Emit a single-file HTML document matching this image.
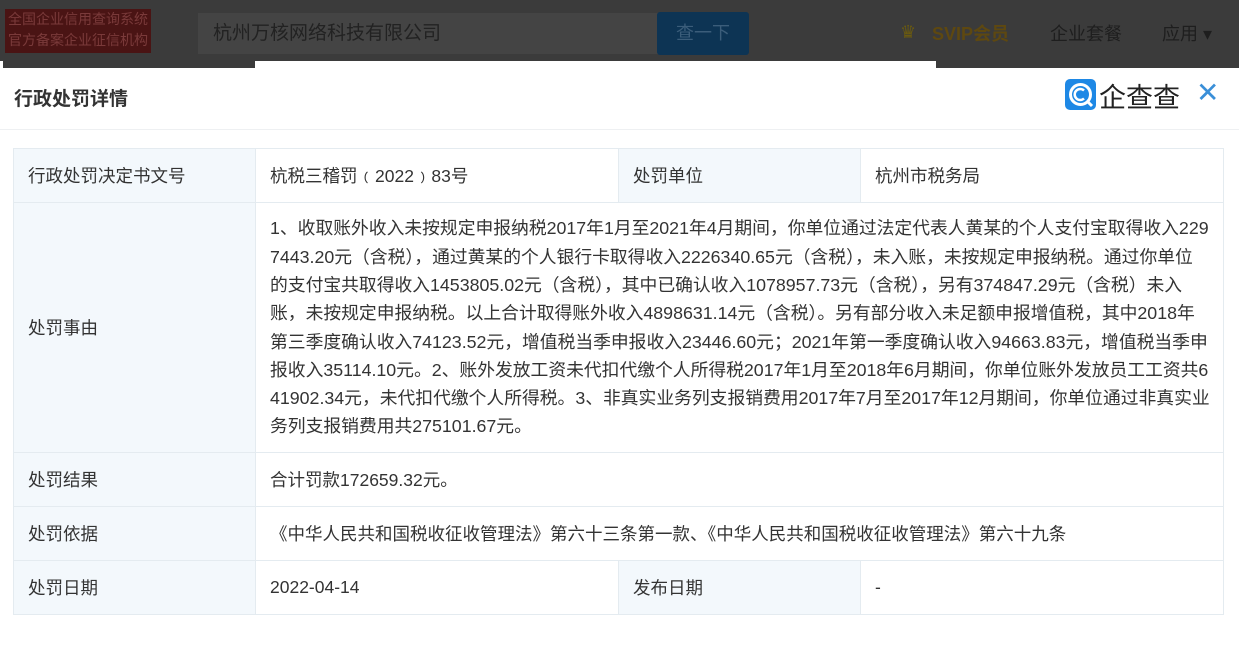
<!DOCTYPE html><html><head><meta charset="utf-8"><style>
body{margin:0;width:1239px;height:657px;overflow:hidden;background:#fff;font-family:"Liberation Sans","Noto Sans CJK SC",sans-serif;position:relative;color:#333}
.top{position:absolute;left:0;top:0;width:1239px;height:61px;background:#3b3b3b}
.abs{position:absolute}
table{position:absolute;left:13px;top:148px;width:1210px;table-layout:fixed;border-collapse:collapse;font-size:17.5px}
td{border:1px solid #e4ebf0;padding:0 14px;vertical-align:middle}
td.l{background:#f3f8fc}
</style></head><body>
<div class="top"></div>
<div class="abs" style="left:3px;top:61px;width:252px;height:7px;background:#3b3b3b"></div>
<div class="abs" style="left:936px;top:61px;width:303px;height:7px;background:#3b3b3b"></div>
<div class="abs" style="left:5px;top:9px;width:146px;height:44px;background:#4a1414;color:#7a3a3a;font-size:14px;line-height:21px;text-align:center;white-space:nowrap;overflow:hidden">全国企业信用查询系统<br>官方备案企业征信机构</div>
<div class="abs" style="left:198px;top:13px;width:466px;height:41px;background:#444;color:#222;font-size:19px;line-height:41px;padding-left:15px;box-sizing:border-box">杭州万核网络科技有限公司</div>
<div class="abs" style="left:657px;top:12px;width:92px;height:43px;background:#0d3454;color:#3b5d7a;font-size:18px;line-height:43px;text-align:center;border-radius:3px">查一下</div>
<div class="abs" style="left:900px;top:22px;width:22px;height:20px;color:#6a5a10;font-size:18px">♛</div>
<div class="abs" style="left:932px;top:20px;color:#5e4810;font-size:18px;font-weight:bold">SVIP会员</div>
<div class="abs" style="left:1050px;top:20px;color:#1e1e1e;font-size:18px">企业套餐</div>
<div class="abs" style="left:1162px;top:20px;color:#1e1e1e;font-size:18px">应用 ▾</div>
<div class="abs" style="left:14px;top:84px;font-size:19px;font-weight:bold;color:#333">行政处罚详情</div>
<svg class="abs" style="left:1065px;top:79px" width="31" height="31" viewBox="0 0 31 31"><rect width="31" height="31" rx="5" fill="#1e88e5"/><circle cx="15.5" cy="15.5" r="10" fill="none" stroke="#fff" stroke-width="3"/><path d="M19 11.5a5.5 5.5 0 1 0 0 8" fill="none" stroke="#fff" stroke-width="2.5"/><path d="M22 22l5 5" stroke="#fff" stroke-width="3"/></svg>
<div class="abs" style="left:1099px;top:76px;font-size:27px;color:#222">企查查</div>
<div class="abs" style="left:1196px;top:76px;font-size:28px;color:#3a8fd8">✕</div>
<div class="abs" style="left:0;top:129px;width:1239px;height:1px;background:#eef0f2"></div>
<table>
<colgroup><col style="width:242px"><col style="width:363px"><col style="width:242px"><col style="width:363px"></colgroup>
<tr style="height:54px"><td class="l">行政处罚决定书文号</td><td>杭税三稽罚﹙2022﹚83号</td><td class="l">处罚单位</td><td>杭州市税务局</td></tr>
<tr style="height:250px"><td class="l">处罚事由</td><td colspan="3" style="line-height:28.3px;white-space:nowrap;font-size:17.8px;overflow:hidden">1、收取账外收入未按规定申报纳税2017年1月至2021年4月期间，你单位通过法定代表人黄某的个人支付宝取得收入229<br>7443.20元（含税），通过黄某的个人银行卡取得收入2226340.65元（含税），未入账，未按规定申报纳税。通过你单位<br>的支付宝共取得收入1453805.02元（含税），其中已确认收入1078957.73元（含税），另有374847.29元（含税）未入<br>账，未按规定申报纳税。以上合计取得账外收入4898631.14元（含税）。另有部分收入未足额申报增值税，其中2018年<br>第三季度确认收入74123.52元，增值税当季申报收入23446.60元；2021年第一季度确认收入94663.83元，增值税当季申<br>报收入35114.10元。2、账外发放工资未代扣代缴个人所得税2017年1月至2018年6月期间，你单位账外发放员工工资共6<br>41902.34元，未代扣代缴个人所得税。3、非真实业务列支报销费用2017年7月至2017年12月期间，你单位通过非真实业<br>务列支报销费用共275101.67元。</td></tr>
<tr style="height:54px"><td class="l">处罚结果</td><td colspan="3">合计罚款172659.32元。</td></tr>
<tr style="height:54px"><td class="l">处罚依据</td><td colspan="3">《中华人民共和国税收征收管理法》第六十三条第一款、《中华人民共和国税收征收管理法》第六十九条</td></tr>
<tr style="height:54px"><td class="l">处罚日期</td><td>2022-04-14</td><td class="l">发布日期</td><td>-</td></tr>
</table>
</body></html>
